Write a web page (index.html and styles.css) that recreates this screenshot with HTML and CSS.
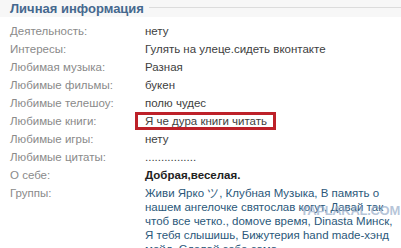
FILE: index.html
```html
<!DOCTYPE html>
<html lang="ru">
<head>
    <meta charset="UTF-8">
    <title>Личная информация</title>
    <link rel="stylesheet" href="styles.css">
</head>
<body>
    <div class="block">
        <div class="head">
            <b>Личная информация</b>
            <span class="rule"></span>
        </div>
        <div class="rows">
            <div class="row"><span class="label">Деятельность:</span><span class="value">нету</span></div>
            <div class="row"><span class="label">Интересы:</span><span class="value">Гулять на улеце.сидеть вконтакте</span></div>
            <div class="row"><span class="label">Любимая музыка:</span><span class="value">Разная</span></div>
            <div class="row"><span class="label">Любимые фильмы:</span><span class="value">букен</span></div>
            <div class="row"><span class="label">Любимые телешоу:</span><span class="value">полю чудес</span></div>
            <div class="row"><span class="label">Любимые книги:</span><span class="value"><span class="mark">Я че дура книги читать</span></span></div>
            <div class="row"><span class="label">Любимые игры:</span><span class="value">нету</span></div>
            <div class="row"><span class="label">Любимые цитаты:</span><span class="value">................</span></div>
            <div class="row"><span class="label">О себе:</span><span class="value bold">Добрая,веселая.</span></div>
            <div class="row"><span class="label">Группы:</span><span class="value groups">Живи Ярко ツ, Клубная Музыка, В память о нашем ангелочке святослав когут, Давай так чтоб все четко., doмove время, Dinasta Минск, Я тебя слышишь, Бижутерия hand made-хэнд мейд, Сделай себе сама</span></div>
        </div>
        <div class="stamp">YAPLAKAL.COM</div>
    </div>
</body>
</html>
```

FILE: styles.css
```css
body {
    margin: 0;
    background: #fff;
    font-family: "Liberation Sans", Arial, sans-serif;
    font-size: 11.5px;
    overflow: hidden;
}
.block {
    position: relative;
    height: 248px;
    overflow: hidden;
}
.head {
    display: flex;
    align-items: center;
    height: 17px;
    padding-left: 10px;
    background: #f7f7f7;
}
.head b {
    color: #45688e;
    font-size: 13px;
    margin-top: -1px;
}
.rule {
    flex: 1;
    height: 1px;
    margin-left: 5px;
    margin-top: -2px;
    background: #dcdcdc;
}
.rows {
    padding-top: 5px;
}
.row {
    display: flex;
    line-height: 14px;
    padding: 2px 0;
}
.label {
    width: 135px;
    padding-left: 10px;
    color: #8a8a8a;
    flex-shrink: 0;
}
.value {
    color: #404040;
    width: 252px;
}
.bold {
    font-weight: bold;
    color: #222;
}
.groups {
    color: #2b587a;
}
.mark {
    display: inline-block;
    margin: -2px 0 -2px -10px;
    padding: 0 6px 0 7px;
    line-height: 12px;
    border: 3px solid #bd2129;
}
.stamp {
    position: absolute;
    left: 300px;
    top: 203px;
    font-weight: bold;
    font-size: 13px;
    letter-spacing: -0.3px;
    color: rgba(150, 172, 200, 0.7);
}
```
